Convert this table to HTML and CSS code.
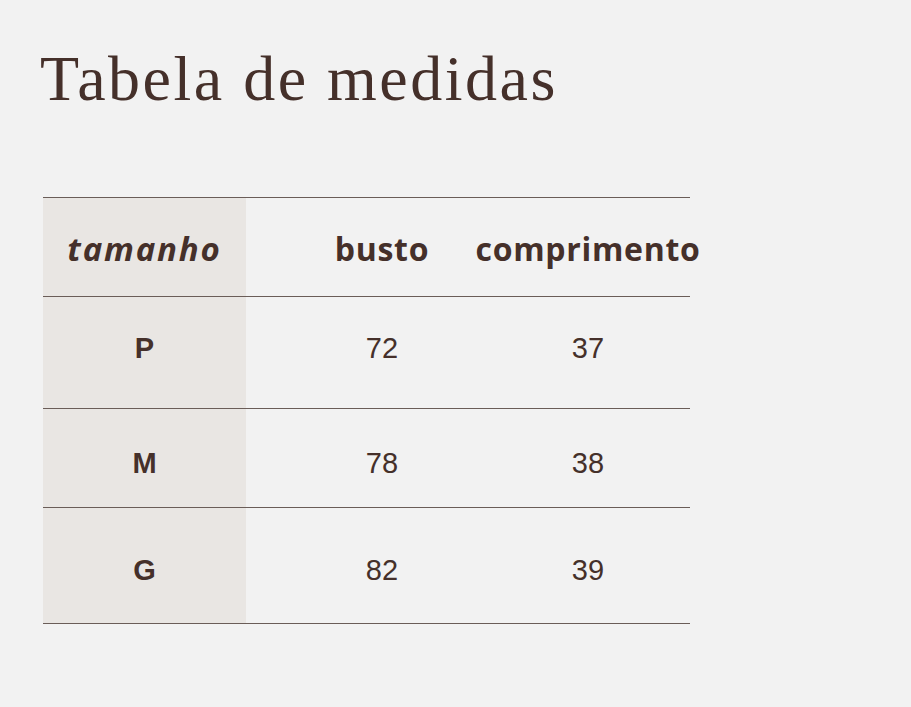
FILE: index.html
```html
<!DOCTYPE html>
<html lang="pt">
<head>
<meta charset="utf-8">
<title>Tabela de medidas</title>
<link rel="stylesheet" href="styles.css">
</head>
<body>
<main class="page">
  <h1 class="title">Tabela de medidas</h1>
  <div class="table">
    <div class="row row-head">
      <div class="cell cell-size head-italic">tamanho</div>
      <div class="cell cell-a head">busto</div>
      <div class="cell cell-b head">comprimento</div>
    </div>
    <div class="row row-p">
      <div class="cell cell-size size">P</div>
      <div class="cell cell-a num">72</div>
      <div class="cell cell-b num">37</div>
    </div>
    <div class="row row-m">
      <div class="cell cell-size size">M</div>
      <div class="cell cell-a num">78</div>
      <div class="cell cell-b num">38</div>
    </div>
    <div class="row row-g">
      <div class="cell cell-size size">G</div>
      <div class="cell cell-a num">82</div>
      <div class="cell cell-b num">39</div>
    </div>
  </div>
</main>
</body>
</html>
```

FILE: styles.css
```css
html, body {
  margin: 0;
  padding: 0;
  background: #f2f2f2;
}
body {
  width: 911px;
  height: 707px;
  overflow: hidden;
  color: #45302a;
}
.page {
  padding: 39px 0 0 43px;
}
.title {
  margin: 0 0 0 -3px;
  font-family: "Liberation Serif", "Times New Roman", serif;
  font-weight: 400;
  font-size: 64px;
  line-height: 80px;
  letter-spacing: 2.5px;
  color: #45302a;
}
.table {
  margin-top: 78px;
  width: 647px;
  border-top: 1px solid #6a5d58;
}
.row {
  display: grid;
  grid-template-columns: 203px 272px 140px 32px;
  border-bottom: 1px solid #6a5d58;
}
.row-head { height: 98px; }
.row-p { height: 111px; }
.row-m { height: 98px; }
.row-g { height: 115px; }
.cell {
  display: flex;
  justify-content: center;
  align-items: flex-start;
  line-height: 30px;
  white-space: nowrap;
}
.row-head .cell, .row-p .cell { padding-top: 36px; }
.row-m .cell { padding-top: 39px; }
.row-g .cell { padding-top: 47px; }
.cell-size {
  background: #e9e6e3;
}
.head-italic {
  font-family: "Open Sans", sans-serif;
  font-style: italic;
  font-weight: 700;
  font-size: 33px;
  letter-spacing: 1.8px;
}
.head {
  font-family: "Open Sans", sans-serif;
  font-weight: 700;
  font-size: 32px;
  letter-spacing: 0.7px;
}
.size {
  font-family: "Liberation Sans", Arial, sans-serif;
  font-weight: 700;
  font-size: 29px;
}
.num {
  font-family: "Liberation Sans", Arial, sans-serif;
  font-weight: 400;
  font-size: 29px;
}
```
